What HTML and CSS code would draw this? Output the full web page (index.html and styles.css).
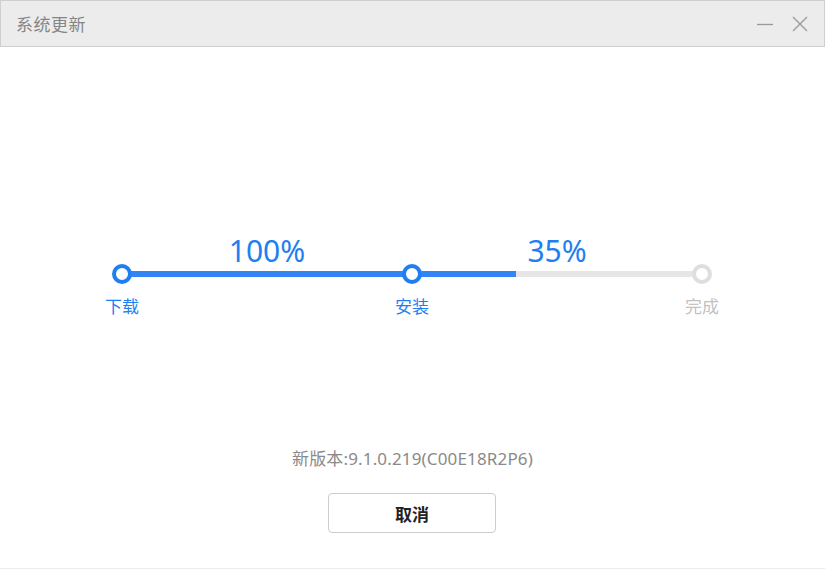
FILE: index.html
```html
<!DOCTYPE html>
<html lang="zh-CN">
<head>
<meta charset="utf-8">
<title>系统更新</title>
<link rel="stylesheet" href="styles.css">
</head>
<body>
<div class="window">
  <header class="titlebar">
    <span class="title">系统更新</span>
    <div class="controls">
      <svg class="ctl" width="16" height="16" viewBox="0 0 16 16"><line x1="0" y1="8.5" x2="16" y2="8.5" stroke="#9a9a9a" stroke-width="1.3"/></svg>
      <svg class="ctl" width="16" height="16" viewBox="0 0 16 16"><path d="M1 1 L15 15 M15 1 L1 15" stroke="#9a9a9a" stroke-width="1.4" fill="none"/></svg>
    </div>
  </header>
  <main class="content">
    <div class="stepper">
      <div class="pct pct-1">100%</div>
      <div class="pct pct-2">35%</div>
      <div class="dot done"></div>
      <div class="seg"><div class="fill" style="width:100%"></div></div>
      <div class="dot done"></div>
      <div class="seg"><div class="fill" style="width:35%"></div></div>
      <div class="dot todo"></div>
      <div class="lbl lbl-1"><span>下载</span></div>
      <div class="lbl lbl-2"><span>安装</span></div>
      <div class="lbl lbl-3 muted"><span>完成</span></div>
    </div>
    <p class="version">新版本:9.1.0.219(C00E18R2P6)</p>
    <button class="cancel">取消</button>
  </main>
</div>
</body>
</html>
```
FILE: styles.css
```css
* { box-sizing: border-box; }
html, body { margin: 0; padding: 0; background: #fff; }
body {
  font-family: "Noto Sans", "Noto Sans CJK SC", sans-serif;
  width: 825px;
  height: 569px;
  overflow: hidden;
}
.window {
  width: 825px;
  height: 569px;
  display: flex;
  flex-direction: column;
  border-bottom: 1px solid #ececec;
}
.titlebar {
  height: 47px;
  flex: none;
  background: #ececec;
  border: 1px solid #cfcfcf;
  display: flex;
  align-items: center;
  justify-content: space-between;
  padding: 0 16px 0 15px;
}
.title {
  font-family: "Noto Sans CJK SC", sans-serif;
  font-size: 17px;
  color: #858585;
  letter-spacing: 0.5px;
}
.controls { display: flex; gap: 19px; align-items: center; }
.ctl { display: block; }
.content {
  flex: 1;
  display: flex;
  flex-direction: column;
  align-items: center;
  padding-top: 190px;
}
.stepper {
  width: 600px;
  margin-left: -1px;
  display: grid;
  grid-template-columns: 20px 1fr 20px 1fr 20px;
  grid-template-rows: 27px 20px auto;
  align-items: center;
}
.pct {
  font-size: 30px;
  line-height: 28px;
  color: #1f7ff2;
  text-align: center;
  grid-row: 1;
  align-self: start;
}
.pct-1 { grid-column: 1 / 4; }
.pct-2 { grid-column: 3 / 6; }
.dot {
  grid-row: 2;
  width: 20px;
  height: 20px;
  border-radius: 50%;
  border: 4px solid #1f7ff2;
  background: #fff;
}
.dot.todo { border-color: #dedede; }
.seg {
  grid-row: 2;
  height: 6px;
  background: #e6e6e6;
  margin: 0 -1px;
}
.fill { height: 100%; background: #3385f6; }
.lbl {
  grid-row: 3;
  display: flex;
  justify-content: center;
  width: 20px;
  margin-top: 11px;
  font-family: "Noto Sans CJK SC", sans-serif;
  font-size: 17px;
  line-height: 22px;
  color: #1f7ff2;
  white-space: nowrap;
}
.lbl-1 { grid-column: 1; }
.lbl-2 { grid-column: 3; }
.lbl-3 { grid-column: 5; }
.lbl.muted { color: #c2c2c2; }
.version {
  margin: 131px 0 0;
  font-size: 17px;
  line-height: 22px;
  color: #8a8a8a;
  letter-spacing: 0.15px;
}
.cancel {
  margin-top: 23px;
  width: 168px;
  height: 40px;
  background: #fff;
  border: 1px solid #cdcdcd;
  border-radius: 4px;
  font-family: "Noto Sans CJK SC", sans-serif;
  font-size: 17px;
  font-weight: bold;
  color: #222;
  margin-left: -1px;
}
```
